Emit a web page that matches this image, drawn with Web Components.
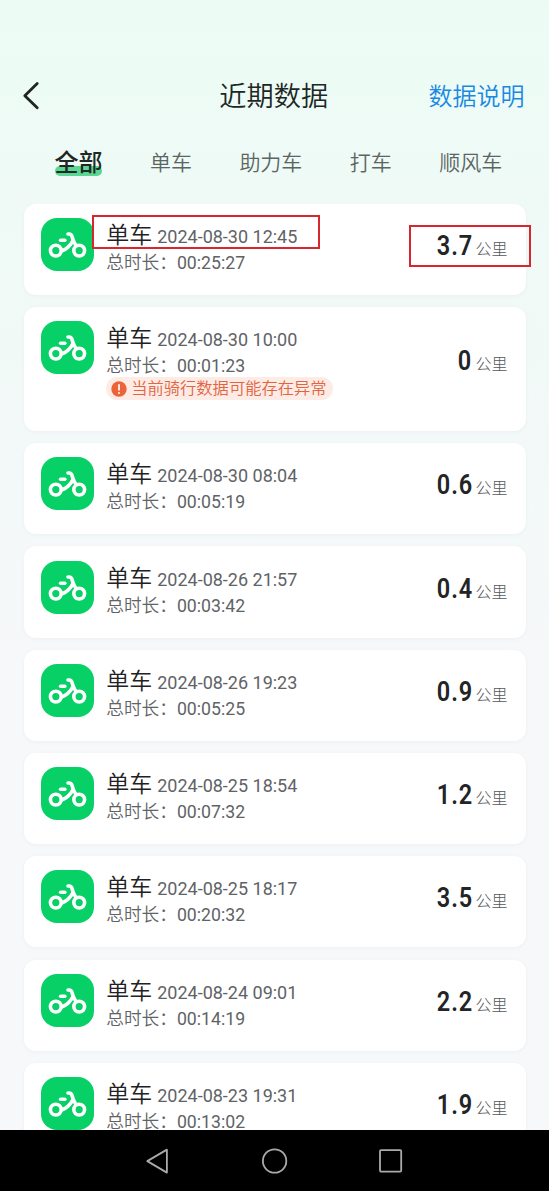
<!DOCTYPE html>
<html lang="zh-CN">
<head>
<meta charset="utf-8">
<title>近期数据</title>
<style>
    body {
        margin: 0;
        height: 1191px;
        overflow: hidden;
        font-family: Roboto, "Noto Sans CJK SC", sans-serif;
    }
</style>
</head>
<body>
<ride-history></ride-history>

<script>
class PageHeader extends HTMLElement {
    constructor() {
        super()
        this.attachShadow({ mode: 'open' })
        this.shadowRoot.innerHTML = `
            <style>
                :host {
                    display: grid;
                    grid-template-columns: 1fr auto 1fr;
                    align-items: center;
                    height: 40px;
                    padding: 77px 24.5px 0 23px;
                    color: #202624;
                    font-size: 27.2px;
                    font-weight: 350;
                    line-height: 40px;
                }
                svg { display: block; margin: -3px 0 0 -1px; }
                .link {
                    justify-self: end;
                    color: #1989e2;
                    font-size: 24px;
                }
            </style>
            <svg width="20" height="30" viewBox="0 0 20 30" fill="none" stroke="#202523" stroke-width="2.8" stroke-linecap="round" stroke-linejoin="round">
                <path d="M15.2 2.6 2.8 14.8 15.2 26.8"/>
            </svg>
            <slot></slot>
            <div class="link"><slot name="action"></slot></div>
        `
    }
}

class TabItem extends HTMLElement {
    constructor() {
        super()
        this.attachShadow({ mode: 'open' })
        this.shadowRoot.innerHTML = `
            <style>
                :host {
                    display: block;
                    color: #5d6562;
                    font-size: 21px;
                    font-weight: 350;
                    line-height: 34px;
                }
                :host([active]) {
                    position: relative;
                    z-index: 0;
                    color: #1f2925;
                    font-size: 24px;
                    font-weight: 500;
                }
                :host([active])::after {
                    content: '';
                    position: absolute;
                    z-index: -1;
                    left: 0;
                    right: 1px;
                    top: 20px;
                    height: 10px;
                    border-radius: 5px;
                    background: #5bd693;
                }
            </style>
            <slot></slot>
        `
    }
}

class TabBar extends HTMLElement {
    constructor() {
        super()
        this.attachShadow({ mode: 'open' })
        this.shadowRoot.innerHTML = `
            <style>
                :host {
                    display: flex;
                    gap: 47.4px;
                    height: 32px;
                    padding: 29px 0 26px 54.6px;
                }
            </style>
            <slot></slot>
        `
    }
}

class BikeIcon extends HTMLElement {
    constructor() {
        super()
        this.attachShadow({ mode: 'open' })
        this.shadowRoot.innerHTML = `
            <style>
                :host { display: block; width: 53px; height: 53px; }
                svg { display: block; }
            </style>
            <svg width="53" height="53" viewBox="0 0 53 53" fill="none" stroke="#fff" stroke-width="3.6" stroke-linecap="round" stroke-linejoin="round">
                <rect width="53" height="53" rx="16" fill="#07d066" stroke="none"/>
                <circle cx="14.8" cy="32.6" r="5.4"/>
                <circle cx="38.2" cy="32.6" r="5.4"/>
                <path d="M19.6 22.2h4.2"/>
                <path d="M27 16h1.2q1.9 0 2.5 1.7l1.4 4.1q.8 2.6 2.6 5.1M32 22.4q-1.6 3.8-5.2 7-2.5 2.2-5.6 3.3"/>
            </svg>
        `
    }
}

class RideCard extends HTMLElement {
    constructor() {
        super()
        this.attachShadow({ mode: 'open' })
    }

    connectedCallback() {
        const { date, time, km, warning } = this.dataset
        const warningHtml = warning ? `
            <div class="warning">
                <svg width="16" height="16" viewBox="0 0 16 16">
                    <circle cx="8" cy="8" r="7.7" fill="#ee6238"/>
                    <path d="M8 3.8v5" stroke="#fff" stroke-width="1.7" stroke-linecap="round"/>
                    <circle cx="8" cy="11.9" r="1" fill="#fff"/>
                </svg>
                <span>${warning}</span>
            </div>` : ''
        this.shadowRoot.innerHTML = `
            <style>
                :host {
                    display: flex;
                    position: relative;
                    box-sizing: border-box;
                    height: 91.2px;
                    padding: 14.2px 18px 0 17.5px;
                    border-radius: 12px;
                    background: #fff;
                    box-shadow: 0 1px 4px rgba(40, 80, 70, .045);
                    flex: none;
                }
                :host([data-warning]) { height: 123.8px; }
                .info { margin-left: 12.2px; padding-top: 1px; flex: 1; }
                .name {
                    display: flex;
                    align-items: baseline;
                    gap: 5px;
                    height: 32px;
                    line-height: 34px;
                    color: #1f2224;
                    font-size: 23px;
                    font-weight: 350;
                }
                .date { font-size: 18px; font-weight: 400; color: #606366; }
                .duration {
                    display: flex;
                    height: 24px;
                    line-height: 25px;
                    font-size: 17.7px;
                    color: #606366;
                }
                .label { width: 70.7px; font-weight: 350; white-space: nowrap; }
                .warning {
                    display: flex;
                    align-items: center;
                    gap: 4px;
                    width: 217px;
                    height: 23px;
                    margin-top: -1px;
                    padding-left: 5px;
                    padding-right: 5px;
                    border-radius: 12px;
                    background: #fdebe6;
                    color: #e2653f;
                    font-size: 16.3px;
                    font-weight: 350;
                    line-height: 25px;
                    white-space: nowrap;
                }
                .distance {
                    display: flex;
                    align-items: baseline;
                    justify-content: flex-end;
                    height: 40px;
                    margin-top: 8px;
                    line-height: 40px;
                }
                :host([data-warning]) .distance { margin-top: 19.6px; }
                .km {
                    font-size: 28px;
                    font-weight: 600;
                    letter-spacing: 1px;
                    color: #222426;
                    transform: scaleX(.84);
                    transform-origin: right;
                    margin-right: 3px;
                }
                .unit { font-size: 16px; font-weight: 300; color: #55585b; }
                .mark {
                    position: absolute;
                    box-sizing: border-box;
                    border: 2px solid #d8262f;
                }
                .mark-name { left: 68.5px; top: 11px; width: 228px; height: 34px; }
                .mark-km { left: 385.5px; top: 20.5px; width: 122px; height: 42px; }
                :host(:not([marked])) .mark { display: none; }
            </style>
            <bike-icon></bike-icon>
            <div class="info">
                <div class="name"><span>单车</span><span class="date">${date}</span></div>
                <div class="duration"><span class="label">总时长：</span><span>${time}</span></div>
                ${warningHtml}
            </div>
            <div class="distance"><span class="km">${km}</span><span class="unit">公里</span></div>
            <div class="mark mark-name"></div>
            <div class="mark mark-km"></div>
        `
    }
}

class SystemNav extends HTMLElement {
    constructor() {
        super()
        this.attachShadow({ mode: 'open' })
        this.shadowRoot.innerHTML = `
            <style>
                :host {
                    display: flex;
                    justify-content: center;
                    align-items: center;
                    gap: 88px;
                    height: 61px;
                    background: #000;
                    flex: none;
                }
            </style>
            <svg width="28" height="28" viewBox="0 0 28 28" fill="none" stroke="#aaa" stroke-width="1.8" stroke-linejoin="round">
                <path d="M21.9 2.6v23L2.3 14.1z"/>
            </svg>
            <svg width="28" height="28" viewBox="0 0 28 28" fill="none" stroke="#aaa" stroke-width="1.8">
                <circle cx="13.6" cy="14" r="11.7"/>
            </svg>
            <svg width="28" height="28" viewBox="0 0 28 28" fill="none" stroke="#aaa" stroke-width="1.8">
                <rect x="3" y="3.2" width="21.2" height="21.4" rx="1"/>
            </svg>
        `
    }
}

const rides = [
    { date: '2024-08-30 12:45', time: '00:25:27', km: '3.7', marked: true },
    { date: '2024-08-30 10:00', time: '00:01:23', km: '0', warning: '当前骑行数据可能存在异常' },
    { date: '2024-08-30 08:04', time: '00:05:19', km: '0.6' },
    { date: '2024-08-26 21:57', time: '00:03:42', km: '0.4' },
    { date: '2024-08-26 19:23', time: '00:05:25', km: '0.9' },
    { date: '2024-08-25 18:54', time: '00:07:32', km: '1.2' },
    { date: '2024-08-25 18:17', time: '00:20:32', km: '3.5' },
    { date: '2024-08-24 09:01', time: '00:14:19', km: '2.2' },
    { date: '2024-08-23 19:31', time: '00:13:02', km: '1.9' }
]

class RideHistory extends HTMLElement {
    constructor() {
        super()
        this.attachShadow({ mode: 'open' })
        const cards = rides.map(r => `
            <ride-card data-date="${r.date}" data-time="${r.time}" data-km="${r.km}"
                ${r.warning ? `data-warning="${r.warning}"` : ''} ${r.marked ? 'marked' : ''}></ride-card>
        `).join('')
        this.shadowRoot.innerHTML = `
            <style>
                :host {
                    display: flex;
                    flex-direction: column;
                    height: 1191px;
                    background: linear-gradient(#ecfcf5 0, #effaf6 200px, #f6f8fa 660px);
                }
                .list {
                    display: flex;
                    flex-direction: column;
                    gap: 12.1px;
                    flex: 1;
                    min-height: 0;
                    overflow: hidden;
                    padding: 0 23.5px;
                }
            </style>
            <page-header>近期数据<span slot="action">数据说明</span></page-header>
            <tab-bar>
                <tab-item active>全部</tab-item>
                <tab-item>单车</tab-item>
                <tab-item>助力车</tab-item>
                <tab-item>打车</tab-item>
                <tab-item>顺风车</tab-item>
            </tab-bar>
            <div class="list">${cards}</div>
            <system-nav></system-nav>
        `
    }
}

customElements.define('page-header', PageHeader)
customElements.define('tab-item', TabItem)
customElements.define('tab-bar', TabBar)
customElements.define('bike-icon', BikeIcon)
customElements.define('ride-card', RideCard)
customElements.define('system-nav', SystemNav)
customElements.define('ride-history', RideHistory)
</script>
</body>
</html>
